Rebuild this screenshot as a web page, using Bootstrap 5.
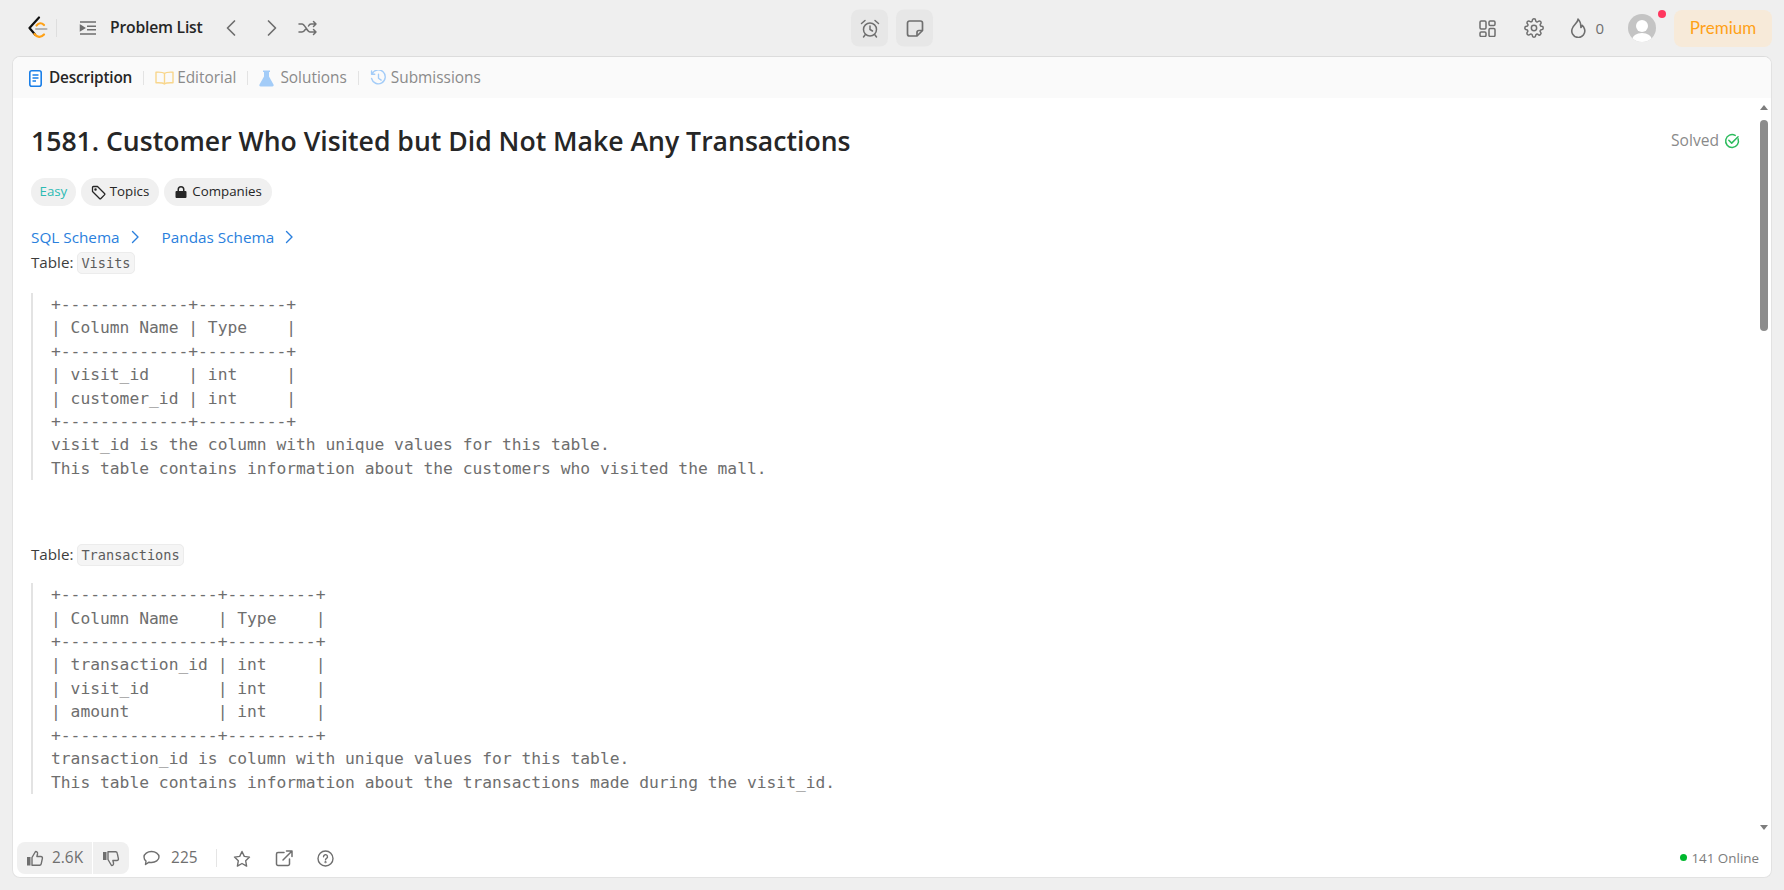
<!DOCTYPE html>
<html lang="en">
<head>
<meta charset="utf-8">
<title>Customer Who Visited but Did Not Make Any Transactions</title>
<link href="https://cdn.jsdelivr.net/npm/bootstrap@5.3.0/dist/css/bootstrap.min.css" rel="stylesheet">
<style>
html,body{height:100%;overflow:hidden}
body{background:#efefef;font-family:"Open Sans","Noto Sans",sans-serif;color:#262626;height:890px;display:flex;flex-direction:column}
.topbar{height:56px;padding:0 12px 0 26px;flex:none}
.topbar svg,.tabsrow svg,.foot svg{display:block;flex:none}
.ticon{color:#6f6f6f}
.plist{font-size:15.7px;font-weight:600;color:#262626;letter-spacing:-.2px}
.logosep{width:1px;height:18px;background:#dedede}
.sqbtn{width:37px;height:37px;background:#e7e7e7;border-radius:8px}
.fire{font-size:15px;color:#6f6f6f}
.avatar{width:28px;height:28px;border-radius:50%;background:#c4c4c4;overflow:hidden}
.reddot{position:absolute;width:8px;height:8px;border-radius:50%;background:#ff375f;top:-4px;right:-10px}
.prem{width:98px;height:37px;background:#f7ead9;border-radius:8px;color:#ffa116;font-size:17px;font-family:"Lato",sans-serif}
.panel{margin:0 12px 0 12px;flex:none;height:822px;background:#fff;border-radius:8px;border:1px solid #e2e2e2;border-top-color:#dcdcdc;overflow:hidden;display:flex;flex-direction:column}
.tabsrow{height:41px;background:#fafafa;padding:1px 0 0 16px;font-size:15.4px;color:#8a8a8a;flex:none}
.tabsrow .on{color:#262626;font-weight:600;letter-spacing:-.2px}
.tsep{width:1px;height:14px;background:#e3e3e3;margin:0 11px}
.scrollarea{flex:1 1 0;min-height:0;position:relative;overflow:hidden;padding:0 0 0 18px}
.ptitle{font-size:26.6px;font-weight:600;line-height:32px;margin:0;color:#262626}
.solved{font-size:15.6px;color:#8a8a8a;margin-right:31px}
.pillrow{gap:5px;margin-top:21px}
.pill{height:28px;border-radius:14px;background:#f0f0f0;font-size:13.3px;padding:0 10px;color:#262626}
.pill.easy{color:#2cbbb4;padding:0 8.500px}
.sch{font-size:15.3px;color:#2a7fdd}
.para{font-size:15.2px;line-height:22px;color:#3c3c3c;margin:0}
.para code{font-family:"DejaVu Sans Mono",monospace;font-size:13.6px;background:#f5f5f5;border:1px solid #ececec;border-radius:5px;padding:2px 3px;color:#5c5c5c}
.codeblk{font-family:"DejaVu Sans Mono",monospace;font-size:16.3px;line-height:23.4px;color:#6e6e6e;border-left:2px solid #e3e3e3;padding:0 0 0 18px;margin:0;white-space:pre;overflow:hidden}
.sbar{position:absolute;right:0;top:0;bottom:0;width:14px;background:#fff}
.sthumb{position:absolute;left:3px;top:22px;width:8px;height:211px;background:#8c8c8c;border-radius:4px}
.arr{position:absolute;left:3px;width:0;height:0;border-left:4px solid transparent;border-right:4px solid transparent}
.foot{height:41px;flex:none;padding:3px 12px 0 4px;color:#6f6f6f;font-size:15.4px}
.likes{height:32px;background:#f0f0f0;border-radius:8px}
.likes>div{padding:0 9px;height:100%}
.likes>div+div{border-left:1px solid #fff}
.vsep{width:1px;height:18px;background:#e5e5e5}
.onl{font-size:13.4px;color:#7d7d7d}
.gdot{width:7px;height:7px;border-radius:50%;background:#00b82e}
</style>
</head>
<body>
<div class="topbar d-flex align-items-center justify-content-between position-relative">
  <div class="d-flex align-items-center">
    <svg width="22" height="24" viewBox="0 0 22 24" fill="none"><path d="M13 1.500 3.500 12l5.500 6.500" stroke="#111" stroke-width="2.200" stroke-linecap="round" stroke-linejoin="round"/><path d="M8.500 18c2.500 3.500 6.500 3.800 9.500.5" stroke="#ffa116" stroke-width="2.200" stroke-linecap="round"/><path d="M10.500 9.500c2.300-2.800 5-3 7.500-.5" stroke="#ffa116" stroke-width="2.200" stroke-linecap="round"/><path d="M10 13h10.500" stroke="#b3b3b3" stroke-width="2" stroke-linecap="round"/></svg>
    <div class="logosep ms-2"></div>
    <svg class="ticon" style="margin-left:22px" width="18" height="18" viewBox="0 0 18 18" fill="none" stroke="currentColor" stroke-width="1.500"><path d="M1 3h16M8 7.300h9M8 10.800h9M1 15h16"/><path d="M1.500 6.500 5.500 9l-4 2.500z" fill="currentColor"/></svg>
    <span class="plist" style="margin-left:13px">Problem List</span>
    <svg class="ticon" style="margin-left:22px" width="12" height="18" viewBox="0 0 12 18" fill="none" stroke="currentColor" stroke-width="1.700" stroke-linecap="round" stroke-linejoin="round"><path d="M9.500 2 2.500 9l7 7"/></svg>
    <svg class="ticon" style="margin-left:29px" width="12" height="18" viewBox="0 0 12 18" fill="none" stroke="currentColor" stroke-width="1.700" stroke-linecap="round" stroke-linejoin="round"><path d="m2.500 2 7 7-7 7"/></svg>
    <svg class="ticon" style="margin-left:20px" width="20" height="18" viewBox="0 0 20 18" fill="none" stroke="currentColor" stroke-width="1.500" stroke-linecap="round" stroke-linejoin="round"><path d="M1 5h3c3 0 5 8 8 8h6M1 13h3c1.300 0 2.300-1 3.300-2.500M10.500 7c.5-1 1.500-2 2.500-2h5M15.500 2.500 18 5l-2.500 2.500M15.500 10.500 18 13l-2.500 2.500"/></svg>
  </div>
  <div class="d-flex align-items-center gap-2 position-absolute top-50 start-50 translate-middle">
    <div class="sqbtn d-flex align-items-center justify-content-center"><svg class="ticon" width="20" height="20" viewBox="0 0 20 20" fill="none" stroke="currentColor" stroke-width="1.500" stroke-linecap="round"><circle cx="10" cy="11" r="6.500"/><path d="M10 7.500V11l2.500 1.500M1.500 5 5 2M18.500 5 15 2M5 16.500 3.500 18.500M15 16.500l1.500 2"/></svg></div>
    <div class="sqbtn d-flex align-items-center justify-content-center"><svg class="ticon" width="18" height="18" viewBox="0 0 18 18" fill="none" stroke="currentColor" stroke-width="1.700" stroke-linejoin="round"><path d="M3.500 1.500h11a2 2 0 0 1 2 2V11l-5.500 5.500H3.500a2 2 0 0 1-2-2v-11a2 2 0 0 1 2-2z"/><path d="M16.500 11H13a2 2 0 0 0-2 2v3.500"/></svg></div>
  </div>
  <div class="d-flex align-items-center">
    <svg class="ticon" width="17" height="17" viewBox="0 0 17 17" fill="none" stroke="currentColor" stroke-width="1.500"><rect x="1" y="1" width="6" height="8" rx="1.200"/><rect x="10" y="1" width="6" height="4.500" rx="1.200"/><rect x="1" y="12" width="6" height="4.500" rx="1.200"/><rect x="10" y="8.500" width="6" height="8" rx="1.200"/></svg>
    <svg class="ticon" style="margin-left:28px" width="20" height="20" viewBox="0 0 24 24" fill="none" stroke="currentColor" stroke-width="1.800" stroke-linejoin="round"><circle cx="12" cy="12" r="3.200"/><path d="M19.400 15a1.700 1.700 0 0 0 .3 1.800l.1.100a2 2 0 1 1-2.900 2.900l-.1-.1a1.700 1.700 0 0 0-2.800 1.200V21a2 2 0 1 1-4 0v-.1a1.700 1.700 0 0 0-2.900-1.200l-.1.100a2 2 0 1 1-2.900-2.900l.1-.1a1.700 1.700 0 0 0-1.200-2.800H3a2 2 0 1 1 0-4h.1a1.700 1.700 0 0 0 1.200-2.900l-.1-.1a2 2 0 1 1 2.900-2.900l.1.100a1.700 1.700 0 0 0 2.800-1.200V3a2 2 0 1 1 4 0v.1a1.700 1.700 0 0 0 2.900 1.200l.1-.1a2 2 0 1 1 2.900 2.900l-.1.100a1.700 1.700 0 0 0 1.200 2.800h.1a2 2 0 1 1 0 4h-.1a1.700 1.700 0 0 0-1.500 1z"/></svg>
    <svg class="ticon" style="margin-left:26px" width="17" height="20" viewBox="0 0 17 20" fill="none" stroke="currentColor" stroke-width="1.600" stroke-linejoin="round"><path d="M8 1c.3 3-4 5.500-5.500 9a6.500 6.500 0 1 0 12 1c-.5-1.500-1.300-2.700-2.300-3.700-.2 1-.6 1.700-1.300 2.200C11 6.500 10.500 3.500 8 1z"/></svg>
    <span class="fire ms-2">0</span>
    <div class="position-relative" style="margin-left:24px">
      <div class="avatar d-flex justify-content-center"><svg width="28" height="28" viewBox="0 0 28 28" fill="#fff"><circle cx="14" cy="12" r="6"/><ellipse cx="14" cy="26" rx="10" ry="7"/></svg></div>
      <span class="reddot"></span>
    </div>
    <div class="prem d-flex align-items-center justify-content-center" style="margin-left:18px">Premium</div>
  </div>
</div>

<div class="panel">
  <div class="tabsrow d-flex align-items-center">
    <svg width="13" height="17" viewBox="0 0 13 17" fill="none"><rect x=".8" y=".8" width="11.400" height="15.400" rx="2" fill="#fff" stroke="#1a7fe8" stroke-width="1.600"/><path d="M3.500 5h6M3.500 8h6M3.500 11h3.500" stroke="#1a7fe8" stroke-width="1.300"/></svg>
    <span class="on" style="margin-left:7px">Description</span>
    <div class="tsep"></div>
    <svg width="19" height="14" viewBox="0 0 19 14" fill="none" stroke="#f8d68c" stroke-width="1.400" stroke-linejoin="round"><path d="M9.500 2.500C8 1 5 1 1 1.200v10.600c4-.2 7-.1 8.500 1.200 1.500-1.300 4.500-1.400 8.500-1.200V1.200C14 1 11 1 9.500 2.500zM9.500 2.500V13"/></svg>
    <span style="margin-left:3px">Editorial</span>
    <div class="tsep"></div>
    <svg width="15" height="17" viewBox="0 0 15 17" fill="#a3ccf8"><path d="M4 .5h7v1.500H10v4.500l4.500 8c.5 1-.2 2-1.200 2H1.700c-1 0-1.700-1-1.200-2L5 6.500V2H4z"/></svg>
    <span style="margin-left:6px">Solutions</span>
    <div class="tsep"></div>
    <svg width="17" height="16" viewBox="0 0 15 15" fill="none" stroke="#a3ccf8" stroke-width="1.300" stroke-linecap="round" stroke-linejoin="round"><path d="M1.500 3.500A6.500 6.500 0 1 1 1 8M1 1v3h3M7.500 4v3.700L10 9.500"/></svg>
    <span class="ms-1">Submissions</span>
  </div>
  <div class="scrollarea">
    <div class="d-flex justify-content-between align-items-center" style="padding-top:27px">
      <h1 class="ptitle">1581. Customer Who Visited but Did Not Make Any Transactions</h1>
      <div class="d-flex align-items-center solved">Solved
        <svg style="margin-left:5px" width="16" height="16" viewBox="0 0 15 15" fill="none" stroke="#2cbb5d" stroke-width="1.400" stroke-linecap="round" stroke-linejoin="round"><path d="M13.200 5.500A6 6 0 1 1 10.500 2.300"/><path d="m4.500 6.800 2.700 2.700 6-6"/></svg>
      </div>
    </div>
    <div class="d-flex pillrow">
      <div class="pill easy d-flex align-items-center">Easy</div>
      <div class="pill d-flex align-items-center"><svg class="me-1" width="15" height="15" viewBox="0 0 15 15" fill="none" stroke="#262626" stroke-width="1.300" stroke-linejoin="round"><path d="M1.500 2.500a1 1 0 0 1 1-1h4l7 7a1 1 0 0 1 0 1.400l-3.600 3.600a1 1 0 0 1-1.400 0l-7-7z"/><circle cx="4.500" cy="4.500" r=".6"/></svg>Topics</div>
      <div class="pill d-flex align-items-center"><svg class="me-1" width="14" height="14" viewBox="0 0 14 14" fill="#262626"><path d="M2.500 6H3.500V4.500a3.500 3.500 0 0 1 7 0V6h1a1 1 0 0 1 1 1v5a1 1 0 0 1-1 1h-9a1 1 0 0 1-1-1V7a1 1 0 0 1 1-1zM5 6h4V4.500a2 2 0 0 0-4 0z"/></svg>Companies</div>
    </div>
    <div class="d-flex align-items-center" style="margin-top:19px;height:24px">
      <span class="sch">SQL Schema</span>
      <svg style="margin-left:10px" width="10" height="14" viewBox="0 0 10 14" fill="none" stroke="#2a7fdd" stroke-width="1.400" stroke-linecap="round" stroke-linejoin="round"><path d="m2.500 1.500 5.500 5.500-5.500 5.500"/></svg>
      <span class="sch" style="margin-left:22px">Pandas Schema</span>
      <svg style="margin-left:10px" width="10" height="14" viewBox="0 0 10 14" fill="none" stroke="#2a7fdd" stroke-width="1.400" stroke-linecap="round" stroke-linejoin="round"><path d="m2.500 1.500 5.500 5.500-5.500 5.500"/></svg>
    </div>
    <p class="para" style="margin-top:2px">Table: <code>Visits</code></p>
    <pre class="codeblk" style="margin-top:19px">+-------------+---------+
| Column Name | Type    |
+-------------+---------+
| visit_id    | int     |
| customer_id | int     |
+-------------+---------+
visit_id is the column with unique values for this table.
This table contains information about the customers who visited the mall.</pre>
    <p class="para" style="margin-top:63px">Table: <code>Transactions</code></p>
    <pre class="codeblk" style="margin-top:17px">+----------------+---------+
| Column Name    | Type    |
+----------------+---------+
| transaction_id | int     |
| visit_id       | int     |
| amount         | int     |
+----------------+---------+
transaction_id is column with unique values for this table.
This table contains information about the transactions made during the visit_id.</pre>
    <div class="sbar">
      <span class="arr" style="top:7px;border-bottom:5px solid #7d7d7d"></span>
      <div class="sthumb"></div>
      <span class="arr" style="bottom:6px;border-top:5px solid #7d7d7d"></span>
    </div>
  </div>
  <div class="foot d-flex align-items-center justify-content-between">
    <div class="d-flex align-items-center">
      <div class="likes d-flex align-items-center">
        <div class="d-flex align-items-center"><svg width="18" height="17" viewBox="0 0 18 17" fill="none"><rect x="1" y="7" width="3.500" height="8.500" fill="#6f6f6f"/><path d="M6 7.500 9.500 1.500c1.500 0 2.300 1 2 2.500l-.6 2.500h4a1.500 1.500 0 0 1 1.500 1.800l-1.200 5.500a1.700 1.700 0 0 1-1.700 1.400H6z" stroke="#6f6f6f" stroke-width="1.400" stroke-linejoin="round"/></svg><span class="ms-2">2.6K</span></div>
        <div class="d-flex align-items-center"><svg width="18" height="17" viewBox="0 0 18 17" fill="none"><rect x="1" y="2" width="3.500" height="8" fill="#6f6f6f"/><path d="M6 9.500 9.500 15.500c1.500 0 2.300-1 2-2.500l-.6-2.500h4a1.500 1.500 0 0 0 1.500-1.800L15.200 3.200a1.700 1.700 0 0 0-1.700-1.400H6z" stroke="#6f6f6f" stroke-width="1.400" stroke-linejoin="round"/></svg></div>
      </div>
      <svg style="margin-left:14px" width="17" height="16" viewBox="0 0 17 16" fill="none" stroke="#6f6f6f" stroke-width="1.400" stroke-linejoin="round"><path d="M8.500 1.500c4 0 7.500 2.400 7.500 5.500s-3.500 5.500-7.500 5.500c-.9 0-1.700-.1-2.500-.3L2.500 14.500l.5-3.500C1.700 10 1 8.600 1 7c0-3.100 3.500-5.500 7.500-5.500z"/></svg>
      <span style="margin-left:11px">225</span>
      <div class="vsep" style="margin-left:19px"></div>
      <svg style="margin-left:16px" width="18" height="17" viewBox="0 0 18 17" fill="none" stroke="#6f6f6f" stroke-width="1.400" stroke-linejoin="round"><path d="m9 1.500 2.300 4.900 5.200.7-3.800 3.700.9 5.300L9 13.500l-4.600 2.600.9-5.300L1.500 7.100l5.200-.7z"/></svg>
      <svg style="margin-left:24px" width="18" height="17" viewBox="0 0 18 17" fill="none" stroke="#6f6f6f" stroke-width="1.500" stroke-linecap="round" stroke-linejoin="round"><path d="M9 2.500H3A1.500 1.500 0 0 0 1.500 4v10A1.500 1.500 0 0 0 3 15.500h10a1.500 1.500 0 0 0 1.500-1.500V9M8 10 16.500 1.500M11.500 1h5.500v5.500"/></svg>
      <svg style="margin-left:24px" width="17" height="17" viewBox="0 0 17 17" fill="none" stroke="#6f6f6f" stroke-width="1.400" stroke-linecap="round"><circle cx="8.500" cy="8.500" r="7.500"/><path d="M6.500 6.700a2 2 0 1 1 3 1.700c-.7.400-1 .8-1 1.500"/><circle cx="8.500" cy="12.200" r=".4"/></svg>
    </div>
    <div class="onl d-flex align-items-center"><span class="gdot me-1"></span>141 Online</div>
  </div>
</div>
<script src="https://cdn.jsdelivr.net/npm/bootstrap@5.3.0/dist/js/bootstrap.bundle.min.js"></script>
</body>
</html>
